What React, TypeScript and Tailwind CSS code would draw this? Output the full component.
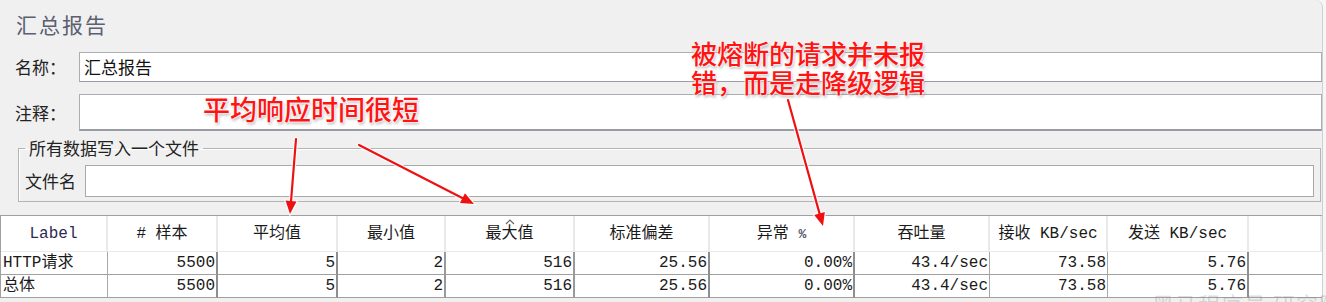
import React from "react";

/* 汇总报告 — JMeter 风格面板，带红色标注 */
const COLS = ["Label", "# 样本", "平均值", "最小值", "最大值", "标准偏差", "异常 %", "吞吐量", "接收 KB/sec", "发送 KB/sec", ""];

const ROWS = [
  ["HTTP请求", "5500", "5", "2", "516", "25.56", "0.00%", "43.4/sec", "73.58", "5.76", ""],
  ["总体", "5500", "5", "2", "516", "25.56", "0.00%", "43.4/sec", "73.58", "5.76", ""],
];

// 数据行竖线：部分列边是粗线
const EDGE = [
  "border-r border-[#a8a8a8]",
  "border-r-2 border-[#8e8e8e]",
  "border-r-2 border-[#8e8e8e]",
  "border-r-2 border-[#9a9a9a]",
  "border-r-2 border-[#9a9a9a]",
  "border-r-2 border-[#8e8e8e]",
  "border-r-2 border-[#8e8e8e]",
  "border-r border-[#a8a8a8]",
  "border-r border-[#a8a8a8]",
  "border-r-2 border-[#8e8e8e]",
  "",
];

const CJK = "font-['Noto_Sans_CJK_SC','Noto_Sans',sans-serif]";
const MONO = "font-['Liberation_Mono','Noto_Sans_CJK_SC',monospace]";

function Arrow({ x1, y1, x2, y2 }: { x1: number; y1: number; x2: number; y2: number }) {
  const len = Math.hypot(x2 - x1, y2 - y1);
  const dx = (x2 - x1) / len;
  const dy = (y2 - y1) / len;
  const bx = x2 - dx * 13;
  const by = y2 - dy * 13;
  const px = -dy * 5.5;
  const py = dx * 5.5;
  const head = `${x2},${y2} ${bx + px},${by + py} ${bx - px},${by - py}`;
  return (
    <g>
      <line x1={x1} y1={y1} x2={bx} y2={by} stroke="#fff" strokeOpacity={0.8} strokeWidth={4.5} strokeLinecap="round" />
      <polygon points={head} fill="#fff" fillOpacity={0.8} stroke="#fff" strokeOpacity={0.8} strokeWidth={2.5} />
      <line x1={x1} y1={y1} x2={bx + dx * 2} y2={by + dy * 2} stroke="#ee1111" strokeWidth={2.2} strokeLinecap="round" />
      <polygon points={head} fill="#ee1111" />
    </g>
  );
}

function Box({ h, children }: { h: string; children?: React.ReactNode }) {
  return (
    <div className={`flex flex-1 items-center border border-[#abadb3] border-b-[#9a9ca4] bg-white pl-[4px] text-[17px] text-[#111] ${h}`}>
      {children}
    </div>
  );
}

export default function App() {
  return (
    <div className={`relative h-[302px] w-[1326px] overflow-hidden bg-[#f6f6f6] ${CJK}`}>
      <div className="flex h-full w-[1323px] flex-col rounded-tr-[8px] border-r border-[#cfcfcf] bg-[#f0f0f0]">
        {/* 标题 */}
        <div className="h-[52px] pl-[16px] pt-[9px] text-[21px] leading-[30px] tracking-[2px] text-[#5b6070]">
          汇总报告
        </div>

        {/* 名称 */}
        <div className="flex items-center">
          <div className="w-[79px] pl-[15px] text-[17px] text-[#222]">名称：</div>
          <Box h="h-[30px]">汇总报告</Box>
        </div>

        {/* 注释 */}
        <div className="mt-[12px] flex items-center">
          <div className="w-[79px] pl-[15px] text-[17px] text-[#222]">注释：</div>
          <Box h="h-[37px] border-b-2" />
        </div>

        {/* 文件 */}
        <fieldset className="ml-[18px] mr-[1px] mt-[7px] border border-[#b4b4b4] px-[6px] pb-[4px] pt-[7px] shadow-[inset_1px_1px_0_#fff]">
          <legend className="px-[4px] text-[17px] leading-[20px] text-[#222]">所有数据写入一个文件</legend>
          <div className="flex items-center">
            <div className="w-[60px] text-[17px] text-[#222]">文件名</div>
            <div className="h-[32px] flex-1 border border-[#a9a9a9] bg-white" />
          </div>
        </fieldset>

        {/* 结果表格 */}
        <div className={`mt-[13px] grid grid-cols-[107px_110px_120px_108px_129px_135px_145px_135px_118px_141px_1fr] border-t border-l border-[#a0a0a0] ${MONO} text-[16px] text-[#1a1a1a]`}>
          {COLS.map((c, i) => (
            <div
              key={c + i}
              className="relative flex h-[36px] items-center justify-center border-r-2 border-b border-[#e9e9e9] bg-white"
            >
              {i === 4 && (
                <svg viewBox="0 0 10 6" className="absolute left-1/2 top-[3px] h-[6px] w-[10px] -translate-x-1/2" aria-hidden>
                  <path d="M1 5L5 1l4 4" fill="none" stroke="#666" strokeWidth={1.2} />
                </svg>
              )}
              {i === 0 ? (
                <span className="text-[#2a2a55]">{c}</span>
              ) : i === 6 ? (
                <span>
                  异常 <span className="text-[13px] font-bold text-[#556]">%</span>
                </span>
              ) : (
                c
              )}
            </div>
          ))}
          {ROWS.map((r, ri) =>
            r.map((v, i) => (
              <div
                key={ri + "-" + i}
                className={`flex h-[23px] items-center overflow-hidden whitespace-nowrap border-b border-b-[#a0a0a0] bg-white leading-none ${EDGE[i]} ${
                  i === 0 ? "justify-start pl-[2px]" : "justify-end pr-px"
                }`}
              >
                {v}
              </div>
            ))
          )}
        </div>
      </div>

      {/* 水印 */}
      <div className="pointer-events-none absolute left-[1152px] top-[287px] whitespace-nowrap text-[22px] tracking-[1px] text-[#8a8a8a]/30">
        黑马程序员 研究院
      </div>

      {/* 箭头 */}
      <svg className="pointer-events-none absolute left-0 top-0" width={1326} height={302} aria-hidden>
        <Arrow x1={296} y1={139} x2={290} y2={214} />
        <Arrow x1={359} y1={145} x2={474} y2={204} />
        <Arrow x1={788} y1={100} x2={823} y2={226} />
      </svg>

      {/* 标注 */}
      <div className="pointer-events-none absolute left-[203px] top-[94px] text-[27px] font-medium leading-[30px] text-[#ff1414] [text-shadow:0_0_2px_#fff,0_0_2px_#fff,0_0_3px_#fff,1px_2px_3px_rgba(0,0,0,0.35)]">
        平均响应时间很短
      </div>
      <div className="pointer-events-none absolute left-[691px] top-[38px] text-[26px] font-medium leading-[29px] text-[#ff1414] [text-shadow:0_0_2px_#fff,0_0_2px_#fff,0_0_3px_#fff,1px_2px_3px_rgba(0,0,0,0.35)]">
        被熔断的请求并未报
        <br />
        错，而是走降级逻辑
      </div>
    </div>
  );
}
